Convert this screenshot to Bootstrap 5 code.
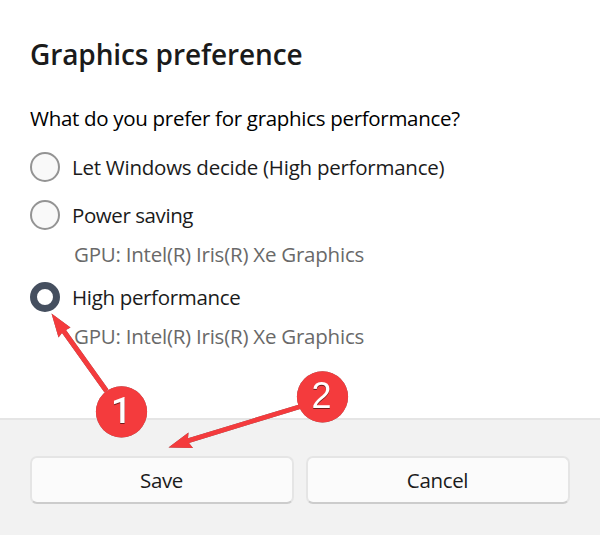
<!DOCTYPE html>
<html lang="en">
<head>
<meta charset="utf-8">
<meta name="viewport" content="width=device-width, initial-scale=1">
<title>Graphics preference</title>
<link href="https://cdn.jsdelivr.net/npm/bootstrap@5.3.0/dist/css/bootstrap.min.css" rel="stylesheet">
<style>
body { font-family: "Open Sans", "Noto Sans", sans-serif; font-size: 20.5px; color: #1b1b1b; background: #fff; overflow: hidden; }
.dialog { width: 600px; height: 535px; white-space: nowrap; }
.dialog-main { height: 418px; padding: 34px 30px 0; }
.title { font-size: 28px; font-weight: 600; line-height: 40px; letter-spacing: -.1px; }
.question { line-height: 30px; margin-top: 29px; color: #000; letter-spacing: -.3px; }
.option { height: 30px; gap: 12px; margin-top: 13px; letter-spacing: -.33px; }
.option-first { margin-top: 19px; letter-spacing: -.25px; }
.option-second { margin-top: 18px; letter-spacing: -.42px; }
.option .form-check-input { width: 30px; height: 30px; border: 2px solid #949494; background-color: #f9f9f9; }
.option .form-check-input:checked { border: 7px solid #454f5f; background: #fff; }
.gpu { line-height: 30px; margin: 9px 0 0 44px; color: #696969; letter-spacing: -.23px; }
.dialog-foot { height: 117px; border-top: 2px solid #e5e5e5; background: #f2f2f2; padding: 36px 30px 0; gap: 12px; }
.action { height: 48px; padding: 0 1px 0 0; font-size: 20.5px; letter-spacing: -.35px; color: #1b1b1b; background: #fbfbfb; border: 2px solid #e5e5e5; border-bottom-color: #ccc; border-radius: 7px; }
.notes { font-size: 36px; pointer-events: none; filter: drop-shadow(.4px .6px .5px rgba(0,0,0,.55)); }
.notes text { font-family: "Liberation Sans", Arial, sans-serif; filter: drop-shadow(.6px 1.2px .5px rgba(0,0,0,.55)); }
.notes .numeral-one { font-family: Roboto, sans-serif; font-weight: 500; }
</style>
</head>
<body>
<div class="dialog position-relative d-flex flex-column">
  <main class="dialog-main">
    <h1 class="title mb-0">Graphics preference</h1>
    <p class="question mb-0">What do you prefer for graphics performance?</p>
    <label class="option option-first d-flex align-items-center">
      <input class="form-check-input m-0" type="radio" name="gpu"><span>Let Windows decide (High performance)</span>
    </label>
    <label class="option option-second d-flex align-items-center">
      <input class="form-check-input m-0" type="radio" name="gpu"><span>Power saving</span>
    </label>
    <p class="gpu">GPU: Intel(R) Iris(R) Xe Graphics</p>
    <label class="option d-flex align-items-center">
      <input class="form-check-input m-0" type="radio" name="gpu" checked><span>High performance</span>
    </label>
    <p class="gpu">GPU: Intel(R) Iris(R) Xe Graphics</p>
  </main>
  <footer class="dialog-foot d-flex align-items-start">
    <button class="btn action flex-fill w-50" type="button">Save</button>
    <button class="btn action flex-fill w-50" type="button">Cancel</button>
  </footer>
  <svg class="notes position-absolute top-0 start-0" width="600" height="535" viewBox="0 0 600 535" fill="#f43b3d">
    <path d="M51.500 313.500 70.500 327.500 66 330 108.500 389.500 104.500 392.500 62 333 58.500 337.500Z"/>
    <path d="M168.500 447.500 188.500 432.500 188 438.200 300 404.200 301 408.700 189 443 193 448Z"/>
    <circle cx="121.500" cy="411.800" r="25.600"/>
    <circle cx="322.500" cy="396.800" r="25.600"/>
    <text class="numeral-one" x="111" y="422.500" fill="#fff">1</text>
    <text x="311.500" y="407.500" fill="#fff">2</text>
  </svg>
</div>
<script src="https://cdn.jsdelivr.net/npm/bootstrap@5.3.0/dist/js/bootstrap.bundle.min.js"></script>
</body>
</html>
